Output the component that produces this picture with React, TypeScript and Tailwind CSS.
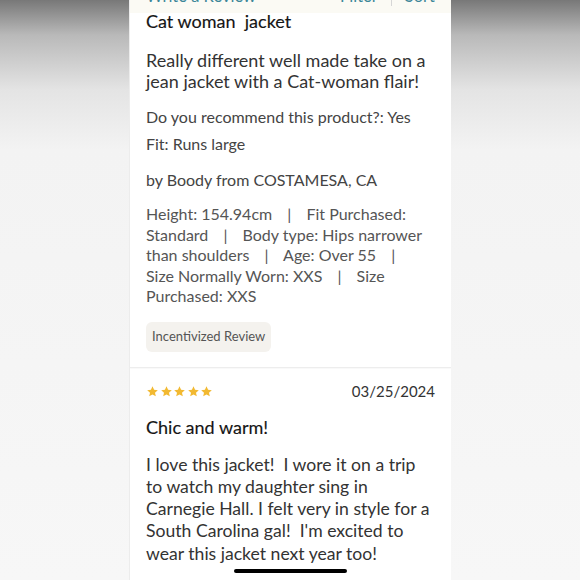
const font = { fontFamily: 'Lato, "Noto Sans", sans-serif' };

function Star() {
  return (
    <svg viewBox="0 0 24 24" className="h-[13px] w-[13px]" fill="#f2b931">
      <path d="M12 2.5l2.9 6.3 6.9.7-5.2 4.6 1.5 6.8L12 17.4l-6.1 3.5 1.5-6.8-5.2-4.6 6.9-.7z" />
    </svg>
  );
}

const sep = (
  <>
    {' '}
    <span className="mx-[11px]">|</span>{' '}
  </>
);

export default function App() {
  return (
    <div
      className="relative flex h-[580px] w-[580px] justify-center overflow-hidden bg-[linear-gradient(to_bottom,#787878_0px,#b9b9b9_35px,#e4e4e4_90px,#f3f3f3_150px,#f7f7f7_100%)]"
      style={font}
    >
      <div className="flex w-[322px] flex-col border-l border-[#ececec] bg-white">
        {/* top action bar, scrolled mostly out of view */}
        <div className="h-[13px] overflow-hidden bg-[#fbfaf4] pl-4 pr-4">
          <div className="-mt-[14px] flex items-center text-[16.5px] leading-[20px] text-[#3d8799]">
            <span>Write a Review</span>
            <span className="ml-auto">Filter</span>
            <span className="mx-[13px] h-[20px] w-px bg-[#d6d6d6]" />
            <span>Sort</span>
          </div>
        </div>

        <div className="px-4">
          <p className="-mt-[3px] text-[18px] leading-[22px] text-[#151515] [-webkit-text-stroke:0.15px_#151515]">
            Cat woman&nbsp; jacket
          </p>
          <p className="mt-[18px] text-[18px] leading-[21px] text-[#333]">
            Really different well made take on a jean jacket with a Cat-woman flair!
          </p>
          <p className="mt-[15px] text-[16px] leading-[20px] text-[#444]">Do you recommend this product?: Yes</p>
          <p className="mt-[7px] text-[16px] leading-[20px] text-[#444]">Fit: Runs large</p>
          <p className="mt-[16px] text-[16px] leading-[20px] text-[#444]">by Boody from COSTAMESA, CA</p>
          <p className="mt-[14px] text-[16px] leading-[20.5px] text-[#555]">
            Height: 154.94cm{sep}Fit Purchased: Standard{sep}Body type: Hips narrower than shoulders{sep}Age: Over 55
            {sep}Size Normally Worn: XXS{sep}Size Purchased: XXS
          </p>
          <div className="mt-[15px] inline-flex h-[30px] items-center rounded-md bg-[#f4f2ee] px-[6px] text-[13px] text-[#555]">
            Incentivized Review
          </div>
        </div>

        <div className="mt-[15px] border-t border-[#ededed] shadow-[0_1px_1px_rgba(0,0,0,0.03)]" />

        <div className="px-4 pt-[14px]">
          <div className="flex h-[20px] items-center justify-between">
            <div className="flex gap-[0.5px]">
              <Star />
              <Star />
              <Star />
              <Star />
              <Star />
            </div>
            <span className="text-[15px] text-[#333]">03/25/2024</span>
          </div>
          <p className="mt-[14px] text-[18px] leading-[22px] text-[#151515] [-webkit-text-stroke:0.15px_#151515]">
            Chic and warm!
          </p>
          <p className="mt-[16px] text-[17.6px] leading-[22.25px] text-[#333]">
            I love this jacket!&nbsp; I wore it on a trip to watch my daughter sing in Carnegie Hall. I felt very in style
            for a South Carolina gal!&nbsp; I'm excited to wear this jacket next year too!
          </p>
        </div>
      </div>

      <div className="absolute bottom-[7px] left-[234px] h-[4px] w-[113px] rounded-full bg-black" />
    </div>
  );
}
